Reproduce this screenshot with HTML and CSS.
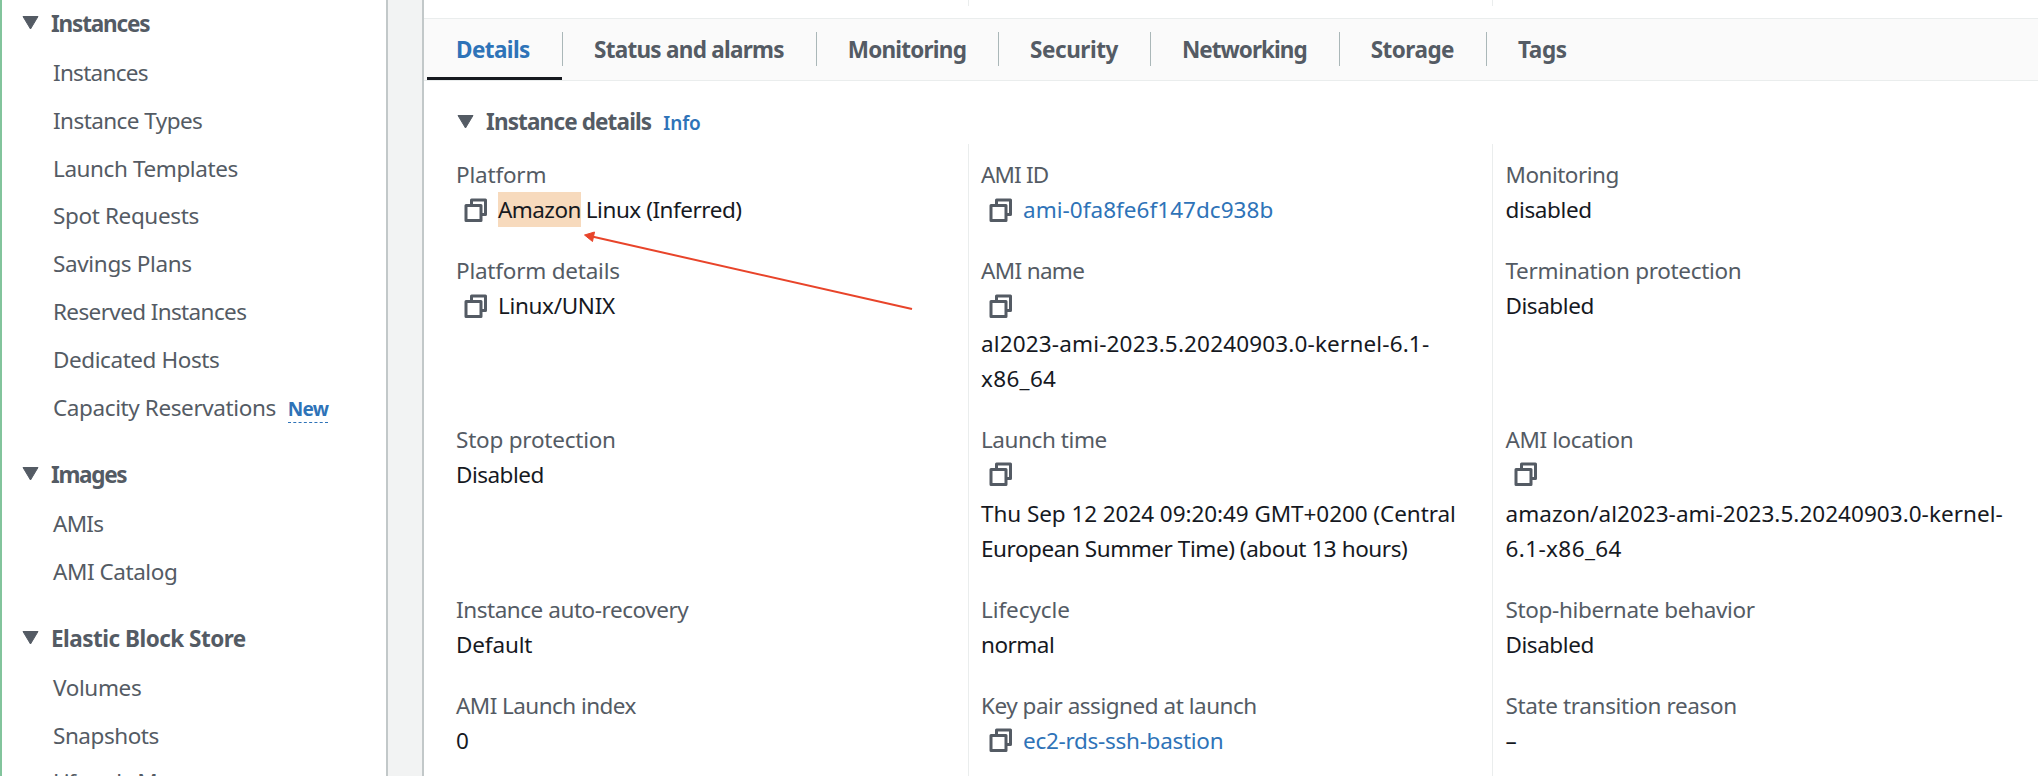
FILE: index.html
```html
<!DOCTYPE html>
<html lang="en">
<head>
<meta charset="utf-8">
<title>EC2 instance details</title>
<link rel="stylesheet" href="styles.css">
</head>
<body>
<svg class="defs" width="0" height="0" aria-hidden="true">
  <symbol id="copy" viewBox="0 0 24 24">
    <path d="M7.5 6V2H21.5V16.5H17.5" />
    <rect x="2" y="7.5" width="15" height="15" />
  </symbol>
  <symbol id="caret" viewBox="0 0 17 14">
    <path d="M1 0.5H16L8.5 13Z" />
  </symbol>
</svg>
<div class="app">
  <nav class="sidebar">
    <div class="group">
      <div class="group-title"><svg class="caret"><use href="#caret"/></svg><span data-w="96.5">Instances</span></div>
      <a class="nav-item"><span data-w="93">Instances</span></a>
      <a class="nav-item"><span data-w="147.5">Instance Types</span></a>
      <a class="nav-item"><span data-w="183">Launch Templates</span></a>
      <a class="nav-item"><span data-w="144">Spot Requests</span></a>
      <a class="nav-item"><span data-w="137">Savings Plans</span></a>
      <a class="nav-item"><span data-w="191.5">Reserved Instances</span></a>
      <a class="nav-item"><span data-w="164.5">Dedicated Hosts</span></a>
      <a class="nav-item"><span data-w="221">Capacity Reservations</span><span class="new" data-w="38.5">New</span></a>
    </div>
    <div class="group">
      <div class="group-title"><svg class="caret"><use href="#caret"/></svg><span data-w="73.5">Images</span></div>
      <a class="nav-item"><span data-w="48.5">AMIs</span></a>
      <a class="nav-item"><span data-w="122.5">AMI Catalog</span></a>
    </div>
    <div class="group">
      <div class="group-title"><svg class="caret"><use href="#caret"/></svg><span data-w="193">Elastic Block Store</span></div>
      <a class="nav-item"><span data-w="86.5">Volumes</span></a>
      <a class="nav-item"><span data-w="104">Snapshots</span></a>
      <a class="nav-item last"><span data-w="170">Lifecycle Manager</span></a>
    </div>
  </nav>
  <div class="gutter"></div>
  <main class="panel">
    <div class="above"></div>
    <div class="tabs">
      <a class="tab active"><span data-w="72">Details</span></a>
      <a class="tab"><span data-w="188">Status and alarms</span></a>
      <a class="tab"><span data-w="116.5">Monitoring</span></a>
      <a class="tab"><span data-w="86">Security</span></a>
      <a class="tab"><span data-w="123">Networking</span></a>
      <a class="tab"><span data-w="81.5">Storage</span></a>
      <a class="tab"><span data-w="47">Tags</span></a>
    </div>
    <div class="section-head"><svg class="caret"><use href="#caret"/></svg><h3 data-w="163.5">Instance details</h3><a class="info" data-w="35.5">Info</a></div>
    <div class="grid">
      <div class="cell"><div class="label"><span data-w="88.5">Platform</span></div>
        <div class="value"><svg class="copy"><use href="#copy"/></svg><mark data-w="81">Amazon</mark><span class="after-mark" data-w="154">Linux (Inferred)</span></div></div>
      <div class="cell"><div class="label"><span data-w="65.5">AMI ID</span></div>
        <div class="value"><svg class="copy"><use href="#copy"/></svg><a class="link" data-w="248.5">ami-0fa8fe6f147dc938b</a></div></div>
      <div class="cell"><div class="label"><span data-w="111.5">Monitoring</span></div>
        <div class="value"><span data-w="84.5">disabled</span></div></div>

      <div class="cell"><div class="label"><span data-w="162">Platform details</span></div>
        <div class="value"><svg class="copy"><use href="#copy"/></svg><span data-w="115">Linux/UNIX</span></div></div>
      <div class="cell"><div class="label"><span data-w="101.5">AMI name</span></div>
        <div class="value icon-line"><svg class="copy"><use href="#copy"/></svg></div>
        <div class="value"><span data-w="446.5">al2023-ami-2023.5.20240903.0-kernel-6.1-</span></div>
        <div class="value"><span data-w="73.5">x86_64</span></div></div>
      <div class="cell"><div class="label"><span data-w="234">Termination protection</span></div>
        <div class="value"><span data-w="86.5">Disabled</span></div></div>

      <div class="cell"><div class="label"><span data-w="158">Stop protection</span></div>
        <div class="value"><span data-w="86">Disabled</span></div></div>
      <div class="cell tall"><div class="label"><span data-w="124">Launch time</span></div>
        <div class="value icon-line"><svg class="copy"><use href="#copy"/></svg></div>
        <div class="value"><span data-w="473">Thu Sep 12 2024 09:20:49 GMT+0200 (Central</span></div>
        <div class="value"><span data-w="424.5">European Summer Time) (about 13 hours)</span></div></div>
      <div class="cell tall"><div class="label"><span data-w="126">AMI location</span></div>
        <div class="value icon-line"><svg class="copy"><use href="#copy"/></svg></div>
        <div class="value"><span data-w="495.5">amazon/al2023-ami-2023.5.20240903.0-kernel-</span></div>
        <div class="value"><span data-w="114.5">6.1-x86_64</span></div></div>

      <div class="cell"><div class="label"><span data-w="230.5">Instance auto-recovery</span></div>
        <div class="value"><span data-w="74.5">Default</span></div></div>
      <div class="cell"><div class="label"><span data-w="87">Lifecycle</span></div>
        <div class="value"><span data-w="71.5">normal</span></div></div>
      <div class="cell"><div class="label"><span data-w="247.5">Stop-hibernate behavior</span></div>
        <div class="value"><span data-w="86.5">Disabled</span></div></div>

      <div class="cell"><div class="label"><span data-w="178">AMI Launch index</span></div>
        <div class="value"><span>0</span></div></div>
      <div class="cell"><div class="label"><span data-w="274">Key pair assigned at launch</span></div>
        <div class="value"><svg class="copy"><use href="#copy"/></svg><a class="link" data-w="198.5">ec2-rds-ssh-bastion</a></div></div>
      <div class="cell"><div class="label"><span data-w="229.5">State transition reason</span></div>
        <div class="value"><span>–</span></div></div>
    </div>
  </main>
  <svg class="arrow" width="336" height="84" viewBox="0 0 336 84" aria-hidden="true">
    <path class="shaft" d="M12 10.5L332 83" />
    <path class="head" d="M4.5 9L14.5 6L12.5 15.5Z" />
  </svg>
</div>
<script src="fit.js"></script>
</body>
</html>
```
FILE: styles.css
```css
* { box-sizing: border-box; }
body {
  margin: 0;
  font: 450 22.5px/35px "Noto Sans", "Open Sans", sans-serif;
  color: #16191f;
  background: #fff;
}
.defs { position: absolute; }
.app {
  position: relative;
  display: flex;
  width: 2038px;
  height: 776px;
  overflow: hidden;
}
[data-w] { white-space: nowrap; }

.sidebar {
  flex: 0 0 388px;
  padding-left: 20px;
  border-left: 2px solid #82c49c;
  border-right: 2px solid #c2c8c9;
  color: #545b64;
}
.group { margin-bottom: 19px; }
.group:first-child { margin-top: -1px; }
.group-title {
  display: flex;
  align-items: center;
  height: 48px;
  margin-bottom: 1.5px;
  font-weight: 700;
}
.group-title .caret { margin: 0 12px 1px 0; }
.caret { width: 17px; height: 14px; fill: #545b64; stroke: #545b64; stroke-width: 1; stroke-linejoin: round; }
.nav-item {
  display: flex;
  align-items: center;
  height: 47.85px;
  padding-left: 31px;
}
.nav-item.last { margin-top: -2px; }
.new {
  margin: 4px 0 0 12px;
  font-size: 19px;
  font-weight: 700;
  line-height: 23px;
  padding-top: 2px;
  padding-bottom: 1px;
  color: #2e73b8;
  border-bottom: 1px dashed #2e73b8;
}

.gutter { flex: 0 0 34px; background: #f2f3f3; }

.panel { flex: 1; min-width: 0; border-left: 2px solid #c2c8c9; }
.above {
  height: 18px;
  background:
    linear-gradient(#eaeded, #eaeded) 544px 0 / 1px 6px no-repeat,
    linear-gradient(#eaeded, #eaeded) 1068px 0 / 1px 6px no-repeat;
}
.tabs {
  display: flex;
  height: 63px;
  padding-left: 3px;
  background: #fafafa;
  border-top: 1px solid #eaeded;
  border-bottom: 1px solid #eaeded;
  font-weight: 700;
  color: #545b64;
}
.tab {
  display: flex;
  height: 61px;
  padding: 0 32px 0 0;
}
.tab::before {
  content: "";
  width: 1px;
  height: 34px;
  margin: 13px 31px 0 0;
  background: #aab7b8;
}
.tab span { padding-top: 12.5px; }
.tab.active {
  width: 135px;
  color: #2e73b8;
  border-bottom: 3px solid #16191f;
  padding-right: 0;
}
.tab.active::before { width: 0; margin-right: 29px; }

.section-head {
  display: flex;
  align-items: center;
  height: 63px;
  padding: 23px 0 5px 33px;
  color: #545b64;
}
.section-head .caret { margin-bottom: 0; }
.section-head h3 { margin: 0 0 0 12px; font-size: 22.5px; font-weight: 700; }
.info { margin-left: 12px; padding-top: 3px; font-size: 19px; font-weight: 600; color: #2e73b8; }

.grid { display: grid; grid-template-columns: 544px 524px 1fr; }
.cell { padding: 0 0 26px 12px; border-left: 1px solid #eaeded; }
.cell:nth-child(3n + 1) { padding-left: 32px; border-left: 0; }
.cell:nth-child(3n) { padding-left: 12.5px; }
.cell:nth-child(-n + 3) { padding-top: 13px; }
.label { height: 35px; color: #545b64; }
.value { display: flex; height: 35px; }
.icon-line { height: 37.5px; }
.tall .icon-line { height: 39px; }
.copy {
  flex: none;
  width: 24px;
  height: 24px;
  margin: 5.5px 10px 0 8px;
  fill: none;
  stroke: #545b64;
  stroke-width: 3;
  stroke-linejoin: round;
}
mark { background: #f7dabd; color: inherit; }
.after-mark { margin-left: 5px; }
.link { color: #2e73b8; }

/* Annotation drawn over the panel */
.arrow { position: absolute; left: 580px; top: 226px; }
.shaft { fill: none; stroke: #e8442a; stroke-width: 2; }
.head { fill: #e8442a; stroke: #e8442a; stroke-width: 1; }
```
FILE: fit.js
```js
const BEARING = 1.8;
document.querySelectorAll("[data-w]").forEach((el) => {
  const range = document.createRange();
  range.selectNodeContents(el);
  const natural = range.getBoundingClientRect().width;
  const target = parseFloat(el.dataset.w) + BEARING;
  el.style.letterSpacing = (target - natural) / el.textContent.length + "px";
});
```
